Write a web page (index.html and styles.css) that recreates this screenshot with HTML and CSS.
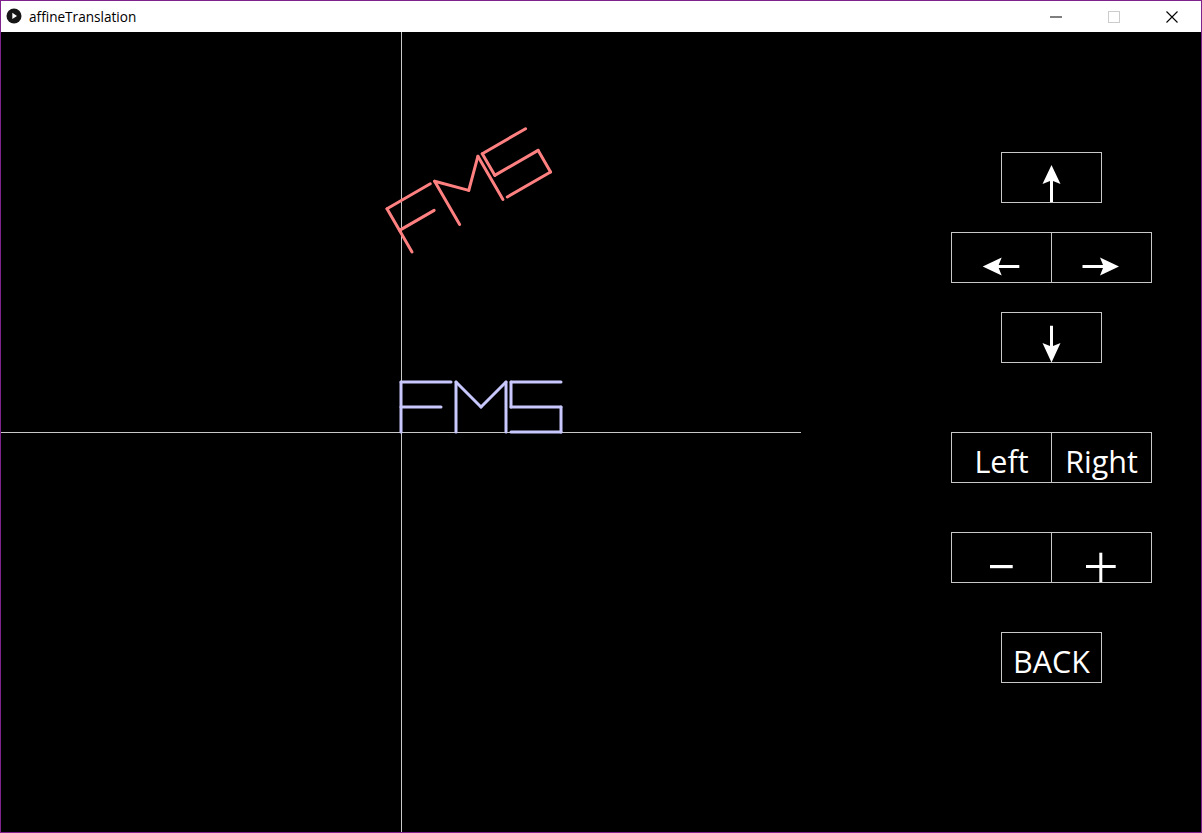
FILE: index.html
```html
<!DOCTYPE html>
<html lang="en">
<head>
<meta charset="utf-8">
<title>affineTranslation</title>
<link rel="stylesheet" href="styles.css">
</head>
<body>
<div class="window">
  <header class="titlebar">
    <svg class="app-icon" width="16" height="16" viewBox="0 0 16 16">
      <circle cx="8" cy="8" r="7.5" fill="#161616"/>
      <path d="M6.3 4.8 L11 7.9 L6.3 11 Z" fill="#ffffff"/>
    </svg>
    <span class="title">affineTranslation</span>
    <div class="controls">
      <span class="ctl">
        <svg width="12" height="12" viewBox="0 0 12 12"><rect x="0" y="5.5" width="12" height="1" fill="#000"/></svg>
      </span>
      <span class="ctl">
        <svg width="12" height="12" viewBox="0 0 12 12"><rect x="0.5" y="0.5" width="11" height="11" fill="none" stroke="#cccccc" stroke-width="1"/></svg>
      </span>
      <span class="ctl">
        <svg width="12" height="12" viewBox="0 0 12 12"><path d="M0.5 0.5 L11.5 11.5 M11.5 0.5 L0.5 11.5" stroke="#000" stroke-width="1.1" fill="none"/></svg>
      </span>
    </div>
  </header>
  <main class="canvas">
    <svg class="plot" width="800" height="800" viewBox="0 0 800 800">
      <line x1="400.5" y1="0" x2="400.5" y2="800" class="axis"/>
      <line x1="0" y1="400.5" x2="800" y2="400.5" class="axis"/>
      <g class="fms-blue">
        <line x1="400" y1="400" x2="400" y2="350"/>
        <line x1="400" y1="350" x2="450" y2="350"/>
        <line x1="400" y1="375" x2="440" y2="375"/>
        <line x1="455" y1="400" x2="455" y2="350"/>
        <line x1="455" y1="350" x2="480" y2="375"/>
        <line x1="480" y1="375" x2="505" y2="350"/>
        <line x1="505" y1="350" x2="505" y2="400"/>
        <line x1="560" y1="350" x2="510" y2="350"/>
        <line x1="510" y1="350" x2="510" y2="375"/>
        <line x1="510" y1="375" x2="560" y2="375"/>
        <line x1="560" y1="375" x2="560" y2="400"/>
        <line x1="560" y1="400" x2="510" y2="400"/>
      </g>
      <g class="fms-red" transform="translate(411 220) rotate(-30) scale(1 -1)">
        <line x1="0" y1="0" x2="0" y2="50"/>
        <line x1="0" y1="50" x2="50" y2="50"/>
        <line x1="0" y1="25" x2="40" y2="25"/>
        <line x1="55" y1="0" x2="55" y2="50"/>
        <line x1="55" y1="50" x2="80" y2="25"/>
        <line x1="80" y1="25" x2="105" y2="50"/>
        <line x1="105" y1="50" x2="105" y2="0"/>
        <line x1="160" y1="50" x2="110" y2="50"/>
        <line x1="110" y1="50" x2="110" y2="25"/>
        <line x1="110" y1="25" x2="160" y2="25"/>
        <line x1="160" y1="25" x2="160" y2="0"/>
        <line x1="160" y1="0" x2="110" y2="0"/>
      </g>
    </svg>
    <div class="panel">
      <div class="box single" aria-label="Up">
        <svg class="glyph" width="99" height="49" viewBox="0 0 99 49">
          <path d="M48 49 L48 28 L40.5 31 L49.5 12 L58.5 31 L51 28 L51 49 Z" fill="#fff"/>
        </svg>
      </div>
      <div class="box pair gap-s">
        <div class="cell" aria-label="Left">
          <svg class="glyph" width="99" height="49" viewBox="0 0 99 49">
            <path d="M67.3 32 L46.7 32 L49.7 24.5 L30.7 33.5 L49.7 42.5 L46.7 35 L67.3 35 Z" fill="#fff"/>
          </svg>
        </div>
        <div class="cell" aria-label="Right">
          <svg class="glyph" width="99" height="49" viewBox="0 0 99 49">
            <path d="M30.5 32 L51 32 L48 24.5 L67 33.5 L48 42.5 L51 35 L30.5 35 Z" fill="#fff"/>
          </svg>
        </div>
      </div>
      <div class="box single gap-s" aria-label="Down">
        <svg class="glyph" width="99" height="49" viewBox="0 0 99 49">
          <path d="M48 12.7 L48 33 L40.5 30 L49.5 49.5 L58.5 30 L51 33 L51 12.7 Z" fill="#fff"/>
        </svg>
      </div>
      <div class="box pair gap-l">
        <div class="cell label">Left</div>
        <div class="cell label">Right</div>
      </div>
      <div class="box pair gap-m">
        <div class="cell" aria-label="Minus">
          <svg class="glyph" width="99" height="49" viewBox="0 0 99 49">
            <rect x="38" y="32" width="22.7" height="3.2" fill="#fff"/>
          </svg>
        </div>
        <div class="cell" aria-label="Plus">
          <svg class="glyph" width="99" height="49" viewBox="0 0 99 49">
            <rect x="34" y="32" width="29.7" height="3" fill="#fff"/>
            <rect x="47.3" y="19.7" width="3" height="29.3" fill="#fff"/>
          </svg>
        </div>
      </div>
      <div class="box single gap-m label">BACK</div>
    </div>
  </main>
</div>
</body>
</html>
```
FILE: styles.css
```css
html, body {
  margin: 0;
  padding: 0;
  background: #ffffff;
}

.window {
  width: 1202px;
  height: 833px;
  box-sizing: border-box;
  border: 1px solid #80228e;
  display: flex;
  flex-direction: column;
  overflow: hidden;
}

.titlebar {
  height: 31px;
  flex: none;
  background: #ffffff;
  display: flex;
  align-items: center;
  padding-left: 5px;
}

.app-icon {
  display: block;
  flex: none;
  margin-top: -1px;
}

.title {
  margin-left: 7px;
  font-family: "Open Sans", "Noto Sans", sans-serif;
  font-size: 13.6px;
  font-variant-ligatures: none;
  color: #000000;
  white-space: nowrap;
  margin-top: 0;
}

.controls {
  margin-left: auto;
  display: flex;
  height: 31px;
}

.ctl {
  width: 58px;
  height: 31px;
  display: flex;
  align-items: center;
  justify-content: center;
}

.ctl svg {
  display: block;
  margin-top: 1px;
}

.canvas {
  width: 1200px;
  height: 800px;
  flex: none;
  background: #000000;
  display: flex;
}

.plot {
  display: block;
  flex: none;
}

.axis {
  stroke: #c8c8c8;
  stroke-width: 1;
}

.fms-blue line {
  stroke: #c8c8ff;
  stroke-width: 3;
  stroke-linecap: round;
}

.fms-red line {
  stroke: #ff8080;
  stroke-width: 3;
  stroke-linecap: round;
}

.panel {
  margin-left: 150px;
  width: 201px;
  flex: none;
  display: flex;
  flex-direction: column;
  align-items: center;
  padding-top: 120px;
}

.box {
  border: 1px solid #c8c8c8;
  height: 49px;
  flex: none;
}

.single {
  width: 99px;
}

.pair {
  width: 199px;
  display: flex;
}

.cell {
  width: 99px;
  height: 49px;
  flex: none;
}

.cell:first-child {
  border-right: 1px solid #c8c8c8;
}

.gap-s {
  margin-top: 29px;
}

.gap-m {
  margin-top: 49px;
}

.gap-l {
  margin-top: 69px;
}

.glyph {
  display: block;
  overflow: visible;
}

.label {
  font-family: "Open Sans", "Noto Sans", sans-serif;
  font-size: 30.5px;
  line-height: 40px;
  color: #ffffff;
  text-align: center;
  white-space: nowrap;
  box-sizing: content-box;
  padding-top: 8px;
  height: 41px;
}
```
